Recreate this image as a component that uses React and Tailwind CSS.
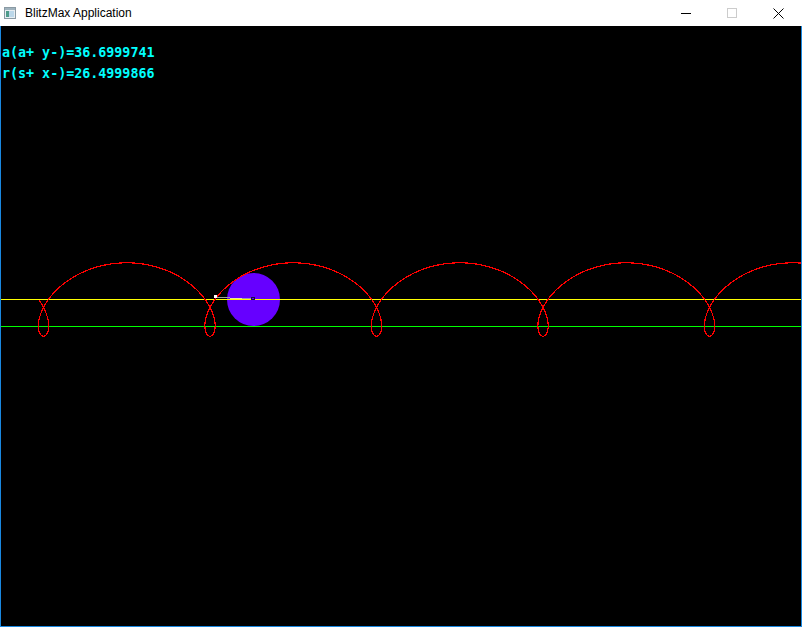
import React from "react";

const R = 26.5;
const D = 36.7;
const CY = 299;
const X0 = 43;

function trochoidPath() {
  const pts = [];
  for (let phi = -Math.PI / 2; ; phi += 0.01) {
    const xc = X0 + R * phi;
    const x = xc - D * Math.sin(phi);
    const y = CY + D * Math.cos(phi);
    pts.push(`${(x + 0.5).toFixed(2)},${(y + 0.5).toFixed(2)}`);
    if (xc > 850) break;
  }
  return "M" + pts.join(" L");
}

const PATH = trochoidPath();

function AppIcon() {
  return (
    <svg width="12" height="12" viewBox="0 0 12 12" className="shrink-0">
      <rect x="0.5" y="0.5" width="11" height="11" fill="#e8eef2" stroke="#8a9aa4" />
      <rect x="1" y="1" width="10" height="2" fill="#9fb2bd" />
      <rect x="2" y="4" width="3" height="6" fill="#4e9b8a" />
      <rect x="5" y="4" width="5" height="6" fill="#bcd8ea" />
    </svg>
  );
}

export default function App() {
  return (
    <div className="w-[802px] h-[627px] flex flex-col bg-white overflow-hidden">
      <div className="h-[26px] flex items-center shrink-0">
        <div className="ml-[4px] flex items-center">
          <AppIcon />
        </div>
        <span className="ml-[9px] text-[12px] text-black font-['Liberation_Sans',Arial,sans-serif] leading-none">
          BlitzMax Application
        </span>
        <div className="ml-auto flex h-full mr-[1px]">
          <div className="w-[46px] h-full flex items-center justify-center">
            <div className="w-[10px] h-[1px] bg-black" />
          </div>
          <div className="w-[46px] h-full flex items-center justify-center">
            <div className="w-[10px] h-[10px] border border-[#cccccc]" />
          </div>
          <div className="w-[46px] h-full flex items-center justify-center">
            <svg width="11" height="11" viewBox="0 0 11 11">
              <path d="M0.5 0.5 L10.5 10.5 M10.5 0.5 L0.5 10.5" stroke="#000" strokeWidth="1" />
            </svg>
          </div>
        </div>
      </div>
      <div className="flex-1 border-x border-b border-[#1a88e0] bg-black relative">
        <svg
          className="absolute inset-0"
          width="800"
          height="600"
          viewBox="1 26 800 600"
        >
          <circle cx="253.5" cy="299.5" r="26.5" fill="#6600ff" />
          <line x1="1" y1="299.5" x2="801" y2="299.5" stroke="#ffff00" strokeWidth="1" shapeRendering="crispEdges" />
          <line x1="1" y1="326.5" x2="801" y2="326.5" stroke="#00ff00" strokeWidth="1" shapeRendering="crispEdges" />
          <path d={PATH} fill="none" stroke="#ff0000" strokeWidth="1.2" shapeRendering="crispEdges" />
          <line x1="217" y1="297.5" x2="230" y2="297.5" stroke="#a0a0a0" strokeWidth="1" shapeRendering="crispEdges" />
          <line x1="230" y1="298.5" x2="242" y2="298.5" stroke="#e8e8a0" strokeWidth="1" shapeRendering="crispEdges" />
          <line x1="242" y1="298.5" x2="251" y2="298.5" stroke="#9a90c0" strokeWidth="1" shapeRendering="crispEdges" />
          <rect x="251.5" y="297.5" width="3" height="2" fill="none" stroke="#1a1040" strokeWidth="1" shapeRendering="crispEdges" />
          <rect x="214" y="295" width="3" height="3" fill="#ffffff" shapeRendering="crispEdges" />
        </svg>
        <div className="relative pl-[1px] pt-[16px] text-[13.33px] leading-[21px] font-bold text-[#00ffff] font-['DejaVu_Sans_Mono','Liberation_Mono',monospace] whitespace-pre">
          <div>a(a+ y-)=36.6999741</div>
          <div>r(s+ x-)=26.4999866</div>
        </div>
      </div>
    </div>
  );
}
